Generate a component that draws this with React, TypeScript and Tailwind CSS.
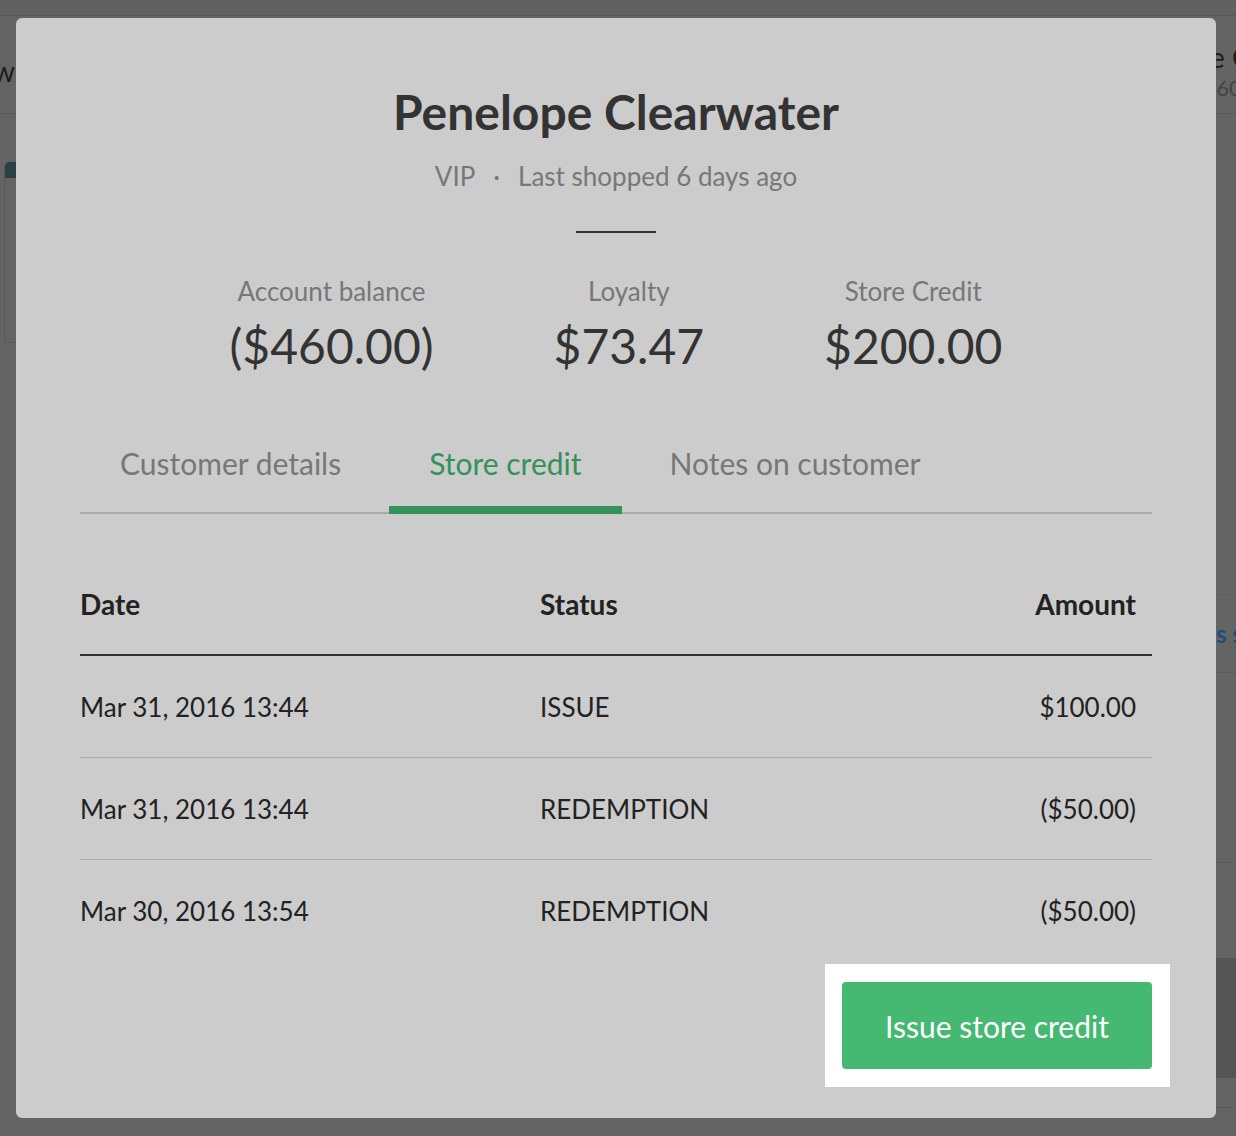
const rows = [
  { date: 'Mar 31, 2016 13:44', status: 'ISSUE', amount: '$100.00' },
  { date: 'Mar 31, 2016 13:44', status: 'REDEMPTION', amount: '($50.00)' },
  { date: 'Mar 30, 2016 13:54', status: 'REDEMPTION', amount: '($50.00)' },
];

const stats = [
  { label: 'Account balance', value: '($460.00)' },
  { label: 'Loyalty', value: '$73.47' },
  { label: 'Store Credit', value: '$200.00' },
];

const tabs = ['Customer details', 'Store credit', 'Notes on customer'];

const BackgroundPage = () => (
  <div className="flex flex-col">
    <div className="h-4 border-b border-[#575757] bg-[#616161]" />
    <div className="flex h-[98px] border-b border-[#5a5a5a]">
      <div className="flex w-[15px] shrink-0 justify-end overflow-hidden pt-[38px]">
        <span className="shrink-0 whitespace-nowrap text-[28px] leading-[34px] text-[#1c1c1c]">View</span>
      </div>
      <div className="w-[1195px] shrink-0" />
      <div className="flex shrink-0 flex-col whitespace-nowrap pt-[24px]">
        <span className="text-[28px] leading-[34px] text-[#1c1c1c]">e Clearwater</span>
        <span className="-ml-[2px] text-[22px] leading-[28px] text-[#444]">-60.00</span>
      </div>
    </div>
    <div className="flex">
      <div className="w-[1216px] shrink-0">
        <div className="ml-1 mt-[47px] h-[182px] w-[220px] overflow-hidden rounded-tl-[6px] border border-[#5a5a5a] bg-[#636363]">
          <div className="h-4 bg-[#2c3f45]" />
        </div>
      </div>
      <div className="flex w-[20px] shrink-0 flex-col">
        <div className="h-[481px] border-b border-[#5c5c5c]" />
        <div className="flex h-[78px] items-center border-b border-[#5c5c5c] whitespace-nowrap text-[24px] font-bold text-[#1d4e78]">
          s s
        </div>
        <div className="h-[190px] border-b border-[#5c5c5c]" />
        <div className="h-[95px]" />
        <div className="h-[120px] bg-[#555]" />
        <div className="h-[30px] border-b border-[#5a5a5a]" />
      </div>
    </div>
  </div>
);

export default function App() {
  return (
    <div className="relative h-[1136px] w-[1236px] overflow-hidden bg-[#646464] font-['Lato',sans-serif]">
      <BackgroundPage />

      <div className="absolute left-4 top-[18px] flex h-[1100px] w-[1200px] flex-col rounded-[6px] bg-[#cccccc] px-16 pt-[65px]">
        <h1 className="text-center text-[48px] font-bold leading-[58px] text-[#333]">Penelope Clearwater</h1>
        <div className="mt-[17px] flex items-center justify-center text-[26px] leading-[36px] text-[#777]">
          <span>VIP</span>
          <span className="mx-[18px]">·</span>
          <span>Last shopped 6 days ago</span>
        </div>
        <div className="mx-auto mt-[37px] h-[2px] w-20 bg-[#333]" />

        <div className="mt-[42px] flex justify-center gap-[120px]">
          {stats.map((s) => (
            <div key={s.label} className="flex flex-col items-center">
              <span className="text-[26px] leading-[32px] text-[#777]">{s.label}</span>
              <span className="mt-[11px] text-[48px] leading-[56px] text-[#333]">{s.value}</span>
            </div>
          ))}
        </div>

        <div className="mt-[71px] flex gap-2 border-b-2 border-[#aaa]">
          {tabs.map((t, i) => (
            <div
              key={t}
              className={`-mb-[2px] border-b-[8px] px-10 pb-[25px] text-[30px] leading-[36px] ${
                i === 1 ? 'border-[#339259] text-[#339259]' : 'border-transparent text-[#777]'
              }`}
            >
              {t}
            </div>
          ))}
        </div>

        <div className="mt-[74px] grid grid-cols-[460px_1fr_auto] border-b-2 border-[#333] pb-[34px] text-[28px] font-bold leading-[32px] text-[#222]">
          <span>Date</span>
          <span>Status</span>
          <span className="pr-4 text-right">Amount</span>
        </div>
        {rows.map((r, i) => (
          <div
            key={i}
            className={`grid grid-cols-[460px_1fr_auto] pb-[34px] pt-[35px] text-[26px] leading-[32px] text-[#222] ${
              i < rows.length - 1 ? 'border-b border-[#aaa]' : ''
            }`}
          >
            <span>{r.date}</span>
            <span>{r.status}</span>
            <span className="pr-4 text-right">{r.amount}</span>
          </div>
        ))}

        <div className="mt-[3px] flex justify-end">
          <div className="-mr-[18px] bg-white py-[18px] pl-[17px] pr-[18px]">
            <button className="h-[87px] w-[310px] rounded-[4px] bg-[#45b872] text-[30px] leading-[36px] text-white">
              Issue store credit
            </button>
          </div>
        </div>
      </div>
    </div>
  );
}
